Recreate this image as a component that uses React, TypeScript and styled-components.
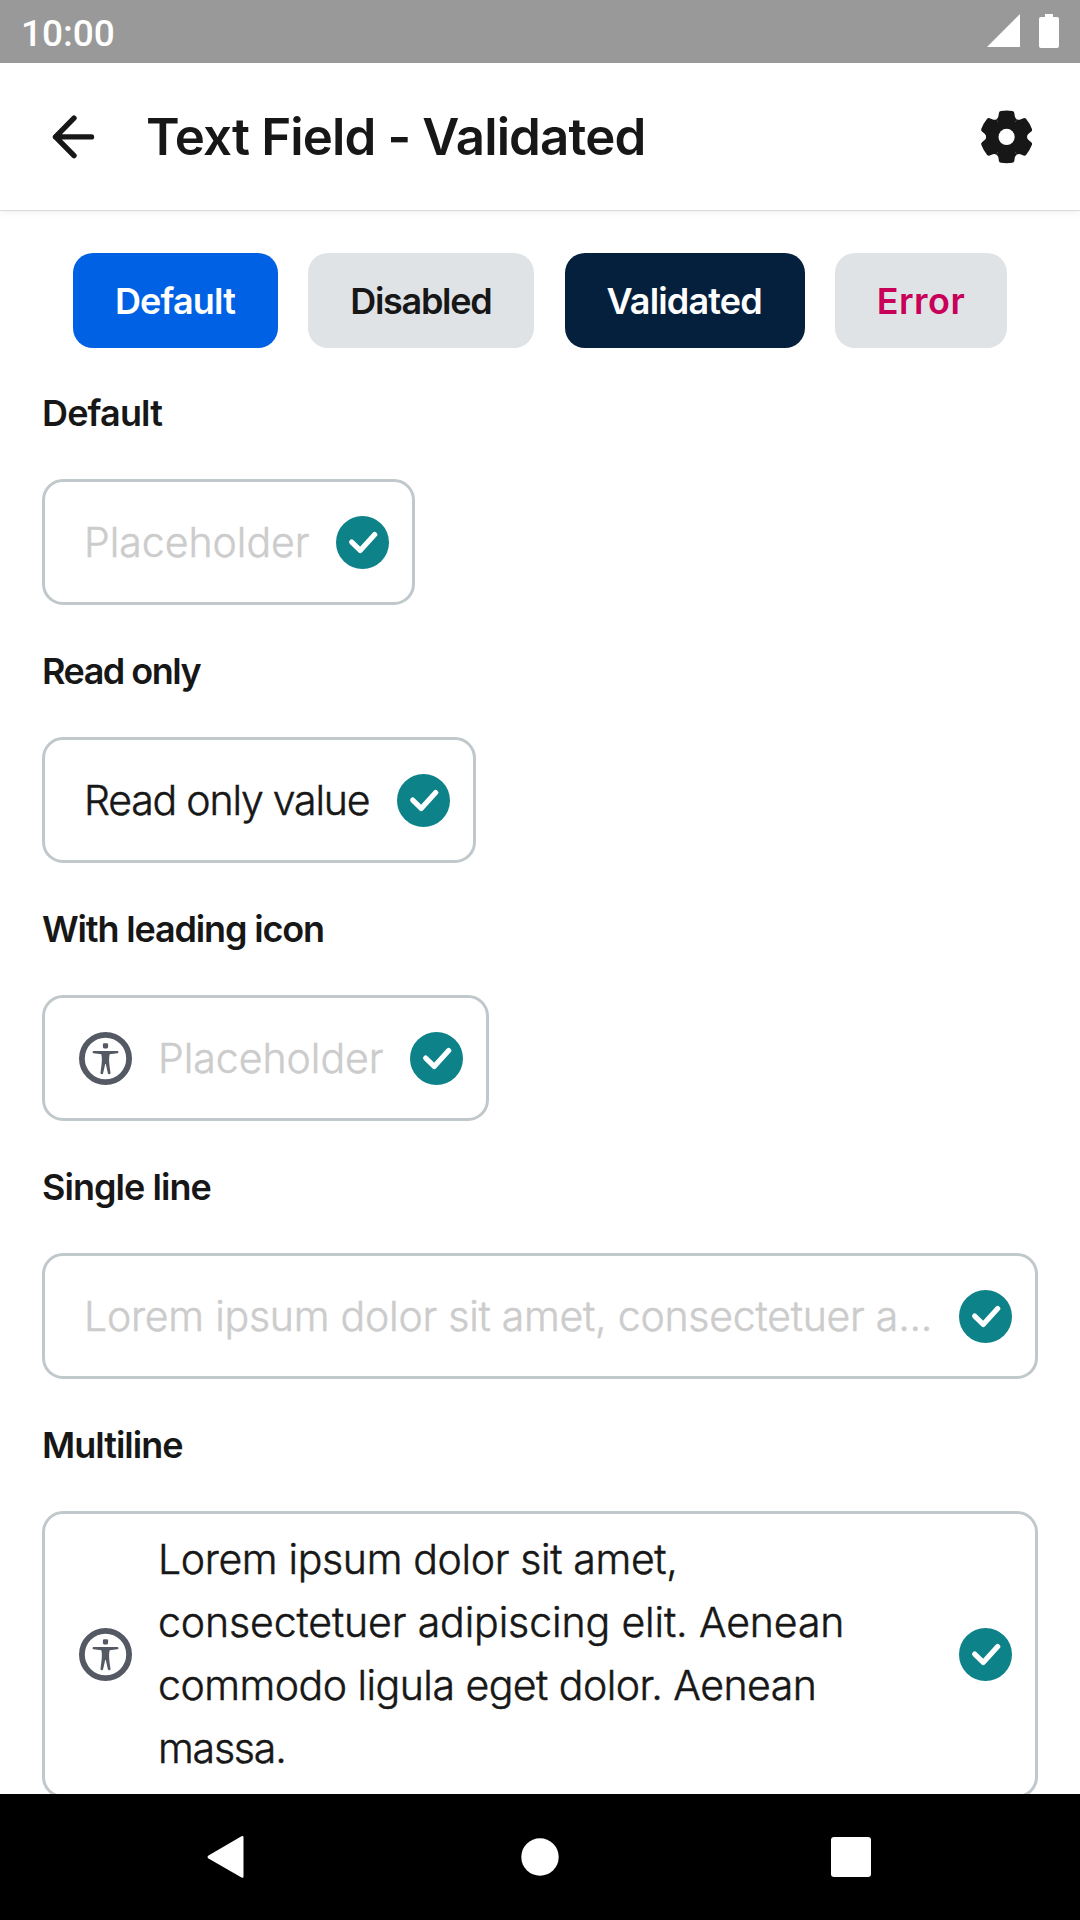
import React from 'react';
import styled, { createGlobalStyle } from 'styled-components';

const Global = createGlobalStyle`
  * { box-sizing: border-box; }
  body { margin: 0; background: #fff; }
`;

const Screen = styled.div`
  display: flex;
  flex-direction: column;
  width: 1080px;
  height: 1920px;
  overflow: hidden;
  background: #fff;
  color: #171717;
  font-family: Inter, 'Liberation Sans', sans-serif;
`;

const StatusBar = styled.div`
  flex: none;
  display: flex;
  align-items: center;
  justify-content: space-between;
  height: 63px;
  padding: 0 21px;
  background: #999;
`;

const Clock = styled.span`
  padding-top: 4px;
  color: #fff;
  font: 500 37px/44px Roboto, sans-serif;
`;

const StatusIcons = styled.div`
  display: flex;
  gap: 19px;
`;

const AppBar = styled.header`
  flex: none;
  display: flex;
  align-items: center;
  height: 147px;
  padding: 0 46px 0 51px;
  background: #fff;
  box-shadow: 0 1px 1px rgba(0, 0, 0, 0.1), 0 3px 8px rgba(0, 0, 0, 0.05);
`;

const Title = styled.h1`
  flex: 1;
  margin: 0 0 0 49px;
  font-size: 51px;
  font-weight: 600;
  line-height: 62px;
  letter-spacing: -0.86px;
  white-space: nowrap;
`;

const IconButton = styled.button`
  display: flex;
  padding: 0;
  border: 0;
  background: none;
  color: inherit;
`;

const Content = styled.main`
  flex: 1;
  min-height: 0;
  overflow: hidden;
  display: flex;
  flex-direction: column;
  padding: 43px 42px 0;
`;

const Chips = styled.div`
  display: flex;
  justify-content: space-between;
  flex: none;
  padding: 0 31px;
  margin-bottom: 44px;
`;

const Chip = styled.button<{ $bg: string; $fg: string; $width: number; $track: number }>`
  width: ${(p) => p.$width}px;
  height: 95px;
  padding: 0 ${(p) => (p.$track < 0 ? 1 : 0)}px 0 0;
  border: 0;
  border-radius: 20px;
  background: ${(p) => p.$bg};
  color: ${(p) => p.$fg};
  font: 600 36px/42px Inter, sans-serif;
  letter-spacing: ${(p) => p.$track}px;
  white-space: nowrap;
`;

const Section = styled.section`
  flex: none;
  display: flex;
  flex-direction: column;
  align-items: flex-start;
  gap: 45px;
  margin-bottom: 45px;
`;

const Label = styled.h2<{ $track: number }>`
  margin: 0;
  font-size: 36px;
  font-weight: 600;
  line-height: 42px;
  letter-spacing: ${(p) => p.$track}px;
`;

const Field = styled.div<{ $width: number; $lead?: boolean; $tall?: boolean }>`
  display: flex;
  align-items: center;
  width: ${(p) => p.$width}px;
  height: ${(p) => (p.$tall ? 287 : 126)}px;
  padding: 0 23px 0 ${(p) => (p.$lead ? 34 : 39)}px;
  border: 3px solid #c1c8cc;
  border-radius: 21px;
`;

const Value = styled.div<{ $muted?: boolean; $lead?: boolean; $tall?: boolean }>`
  flex: 1;
  min-width: 0;
  margin-left: ${(p) => (p.$lead ? 26 : 0)}px;
  padding-bottom: ${(p) => (p.$tall ? 2 : 0)}px;
  color: ${(p) => (p.$muted ? '#ccc' : '#171717')};
  font-size: 41px;
  font-weight: 300;
  line-height: 63px;
  white-space: nowrap;
  -webkit-text-stroke: 0.5px currentColor;
`;

const Line = styled.span<{ $track: number }>`
  display: block;
  letter-spacing: ${(p) => p.$track}px;
`;

const NavBar = styled.nav`
  flex: none;
  display: flex;
  align-items: center;
  height: 126px;
  padding-left: 207px;
  background: #000;
`;

const NavButton = styled(IconButton)<{ $gap?: number }>`
  margin-left: ${(p) => p.$gap ?? 0}px;
`;

const BackIcon = () => (
  <svg width="46" height="48" viewBox="0 0 46 48" fill="none" stroke="#171717" strokeWidth="5.4" strokeLinecap="round" strokeLinejoin="round">
    <path d="M40.5 23.9H4.5M23 5.2 4.5 23.9 23 42.6" />
  </svg>
);

const GearIcon = () => (
  <svg width="54" height="54" viewBox="-26.6 -26.9 54 54" fill="#171717">
    {[0, 60, 120, 180, 240, 300].map((a) => (
      <path
        key={a}
        transform={`rotate(${a})`}
        d="M0 0-10.25-17.75Q-8.5-18.6-8.2-20.6L-7.7-24Q-7.4-25.7-5.6-25.9Q0-26.8 5.6-25.9Q7.4-25.7 7.7-24L8.2-20.6Q8.5-18.6 10.25-17.75Z"
      />
    ))}
    <circle r="17" />
    <circle r="8.1" fill="#fff" />
  </svg>
);

const CheckIcon = () => (
  <svg width="53" height="53" viewBox="-26.5 -26.5 53 53">
    <circle r="26.5" fill="#0d8289" />
    <path d="M-10.8-.4-2.3 7.9 12.2-7.9" fill="none" stroke="#fff" strokeWidth="5.2" strokeLinecap="round" strokeLinejoin="round" />
  </svg>
);

const PersonIcon = () => (
  <svg width="53" height="53" viewBox="-26.5 -26.5 53 53" fill="#545964">
    <circle r="23.6" fill="none" stroke="#545964" strokeWidth="5.8" />
    <rect x="-2.6" y="-15.3" width="5.2" height="5.2" rx="1.3" />
    <path d="M-11.8-7.4H11.8a1.1 1.1 0 0 1 .1 2.2L4.2-4.3C3.3-.5 3.4 3.5 5 14.2a1.3 1.3 0 0 1-2.6.5L.3 5.4H-.3L-2.4 14.7A1.3 1.3 0 0 1-5 14.2C-3.4 3.5-3.3-.5-4.2-4.3L-11.9-5.2a1.1 1.1 0 0 1 .1-2.2Z" />
  </svg>
);

type FieldSpec = {
  label: string;
  labelTrack: number;
  width: number;
  muted?: boolean;
  lead?: boolean;
  tall?: boolean;
  lines: [string, number][];
};

const fields: FieldSpec[] = [
  { label: 'Default', labelTrack: -0.85, width: 373, muted: true, lines: [['Placeholder', -0.02]] },
  { label: 'Read only', labelTrack: -1.5, width: 434, lines: [['Read only value', -1.2]] },
  { label: 'With leading icon', labelTrack: -1.16, width: 447, muted: true, lead: true, lines: [['Placeholder', -0.02]] },
  { label: 'Single line', labelTrack: -0.95, width: 996, muted: true, lines: [['Lorem ipsum dolor sit amet, consectetuer a...', -0.24]] },
  {
    label: 'Multiline', labelTrack: -1, width: 996, lead: true, tall: true,
    lines: [
      ['Lorem ipsum dolor sit amet,', -0.35],
      ['consectetuer adipiscing elit. Aenean', -0.12],
      ['commodo ligula eget dolor. Aenean', -0.52],
      ['massa.', -1.2],
    ],
  },
];

export default function App() {
  return (
    <Screen>
      <Global />
      <StatusBar>
        <Clock>10:00</Clock>
        <StatusIcons>
          <svg width="33" height="35" viewBox="0 0 33 35" fill="#fff"><path d="M0 33 33 0V33Z" /></svg>
          <svg width="20" height="35" viewBox="0 0 20 35" fill="#fff">
            <path d="M6 0H14V3H18a2 2 0 0 1 2 2V32a2 2 0 0 1-2 2H2a2 2 0 0 1-2-2V5A2 2 0 0 1 2 3H6Z" />
          </svg>
        </StatusIcons>
      </StatusBar>
      <AppBar>
        <IconButton aria-label="Back"><BackIcon /></IconButton>
        <Title>Text Field - Validated</Title>
        <IconButton aria-label="Settings"><GearIcon /></IconButton>
      </AppBar>
      <Content>
        <Chips>
          <Chip $bg="#0061e4" $fg="#fff" $width={205} $track={-0.85}>Default</Chip>
          <Chip $bg="#dfe3e6" $fg="#171717" $width={226} $track={-1.3}>Disabled</Chip>
          <Chip $bg="#05203c" $fg="#fff" $width={240} $track={-0.85}>Validated</Chip>
          <Chip $bg="#dfe3e6" $fg="#c80058" $width={172} $track={0.5}>Error</Chip>
        </Chips>
        {fields.map((f) => (
          <Section key={f.label}>
            <Label $track={f.labelTrack}>{f.label}</Label>
            <Field $width={f.width} $lead={f.lead} $tall={f.tall}>
              {f.lead && <PersonIcon />}
              <Value $muted={f.muted} $lead={f.lead} $tall={f.tall}>
                {f.lines.map(([text, track]) => (
                  <Line key={text} $track={track}>{text}</Line>
                ))}
              </Value>
              <CheckIcon />
            </Field>
          </Section>
        ))}
      </Content>
      <NavBar>
        <NavButton aria-label="Back">
          <svg width="37" height="42" viewBox="0 0 37 42" fill="#fff"><path d="M34.5.2Q36.5-.3 36.5 1.5V40.5Q36.5 42.3 34.5 41.5L1.5 22.6Q-.5 21 1.5 19.4Z" /></svg>
        </NavButton>
        <NavButton aria-label="Home" $gap={277}>
          <svg width="38" height="38" viewBox="0 0 38 38" fill="#fff"><circle cx="19" cy="19" r="18.7" /></svg>
        </NavButton>
        <NavButton aria-label="Recents" $gap={272}>
          <svg width="40" height="40" viewBox="0 0 40 40" fill="#fff"><rect width="40" height="40" rx="3" /></svg>
        </NavButton>
      </NavBar>
    </Screen>
  );
}
